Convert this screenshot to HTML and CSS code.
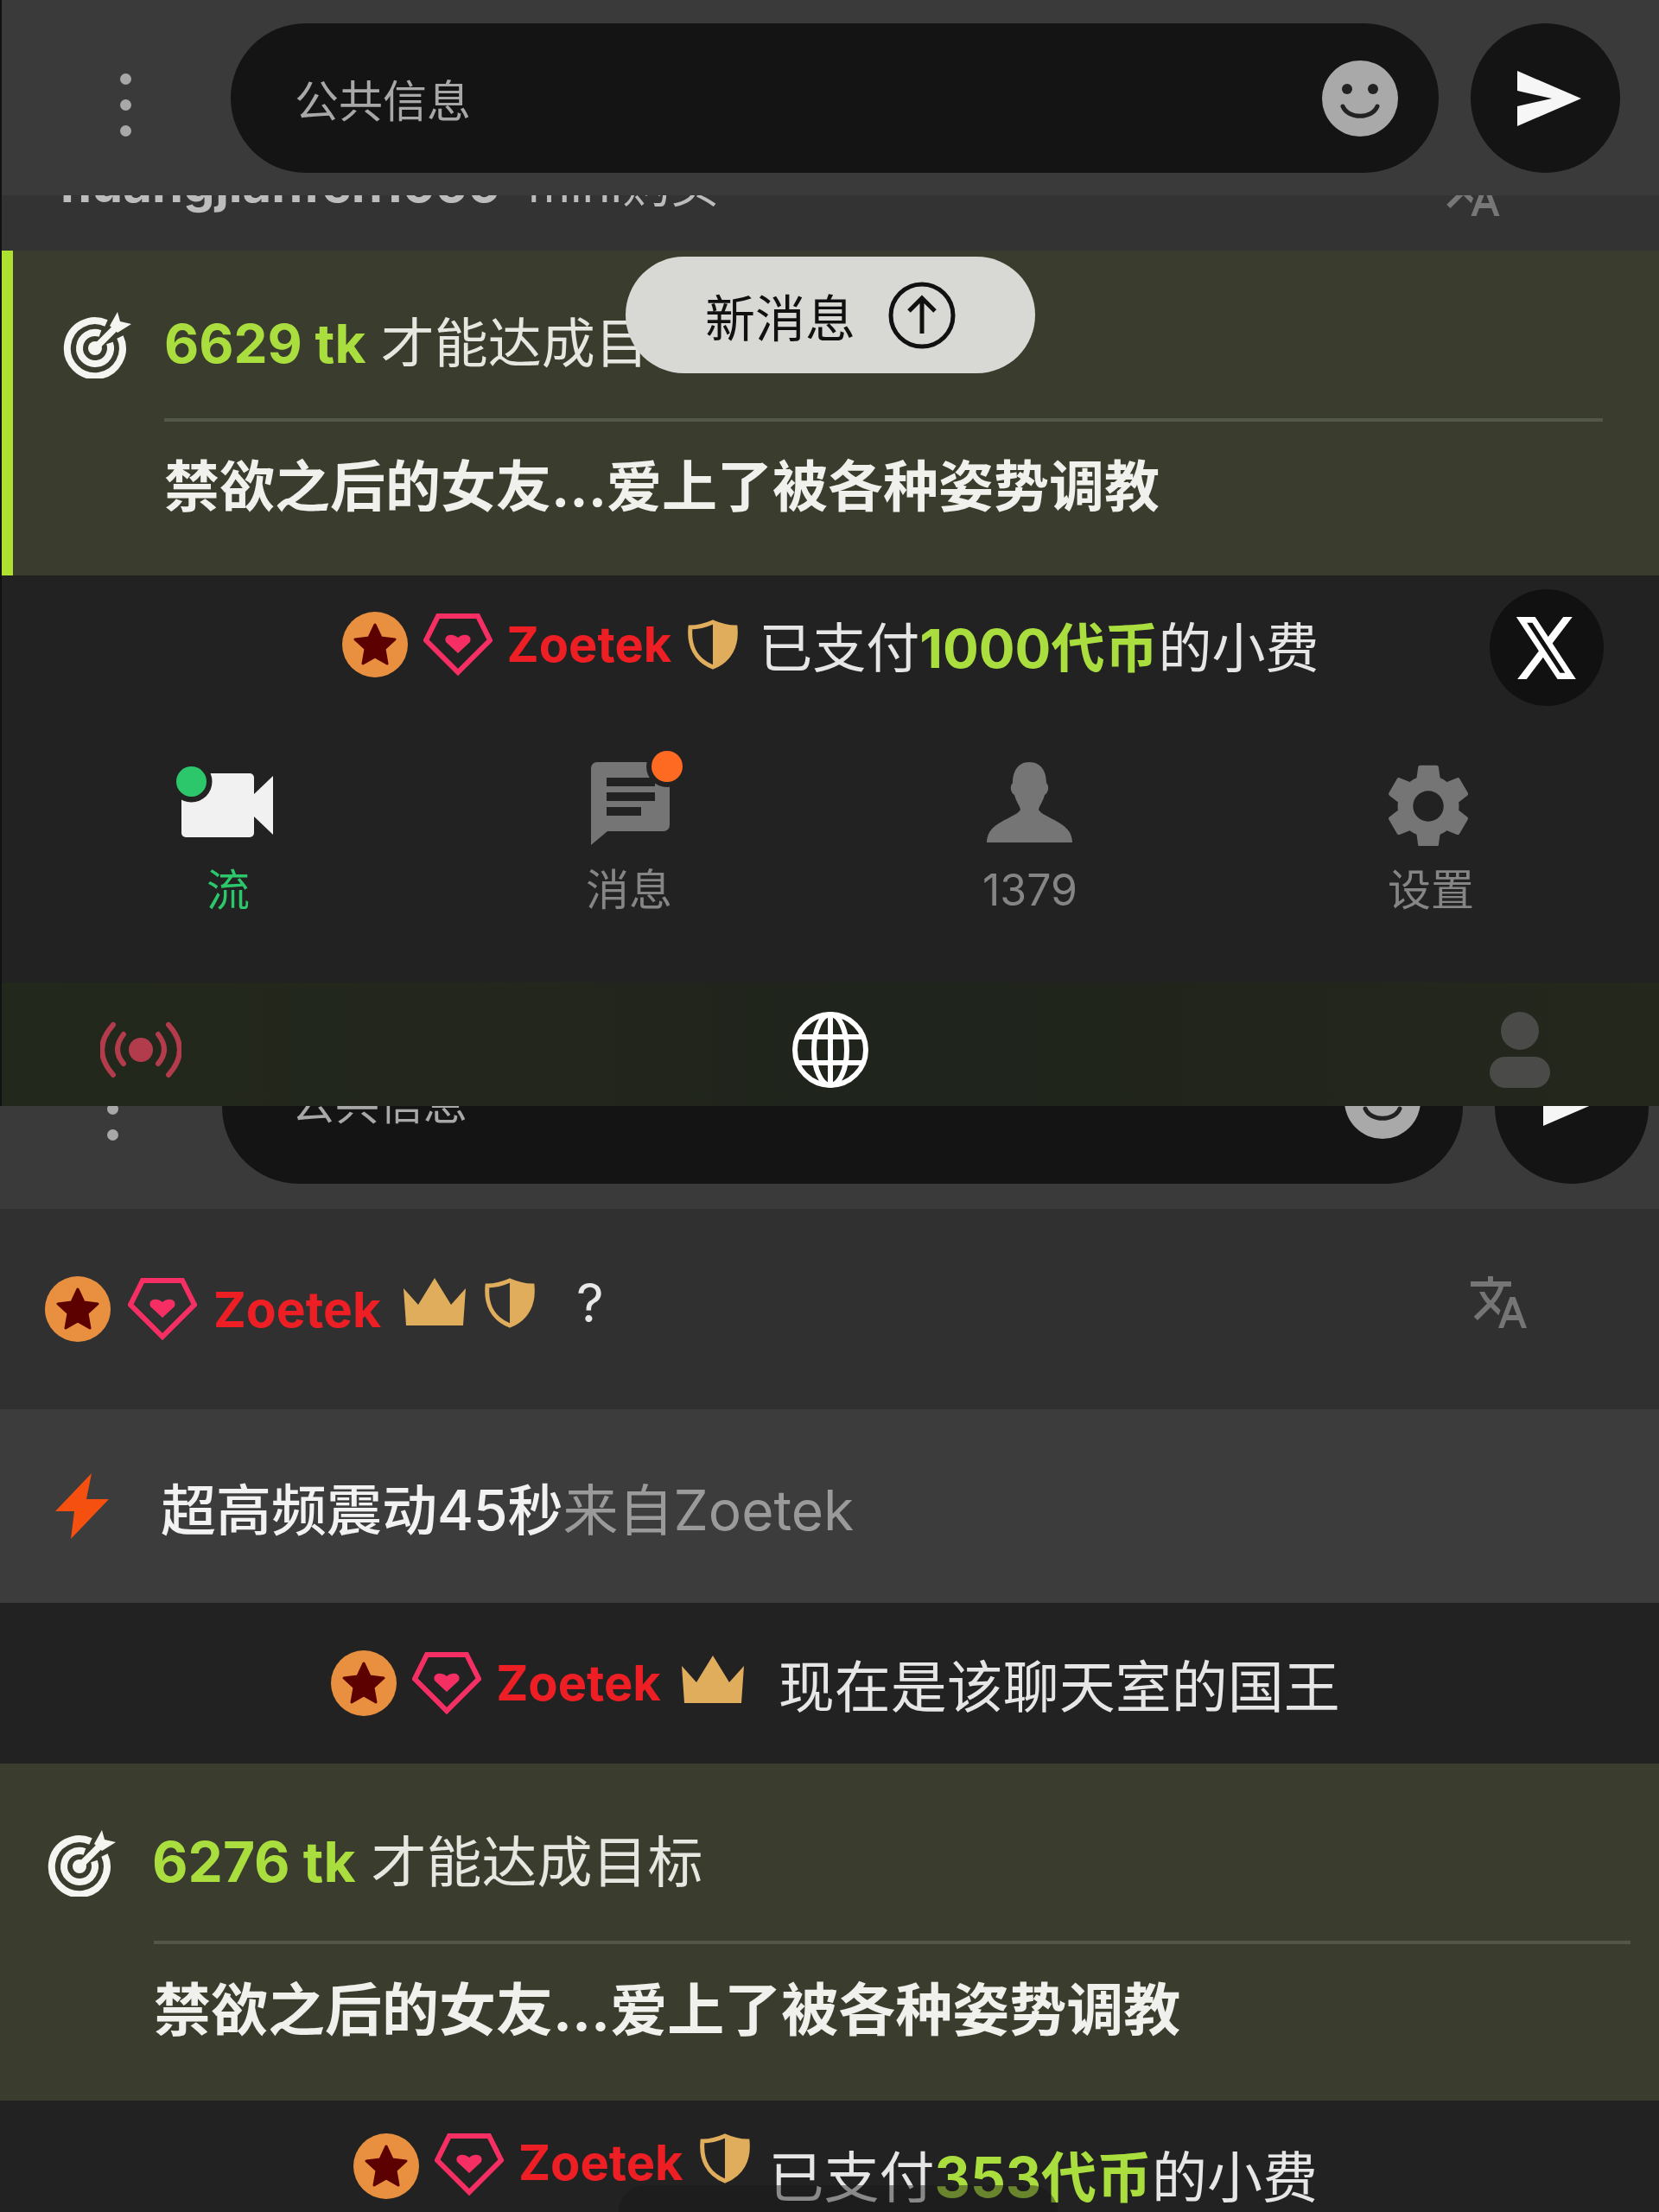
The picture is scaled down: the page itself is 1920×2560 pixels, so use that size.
FILE: index.html
```html
<!DOCTYPE html>
<html>
<head>
    <title>Chat</title>
    <link rel="stylesheet" href="styles.css">
</head>
<body>
    <!-- shared icons -->
    <svg class="defs" width="0" height="0">
        <symbol id="i-star" viewBox="0 0 76 76">
            <circle cx="38" cy="38" r="38" fill="#e8903f"/>
            <path d="M38 15l7 15 16 2-12 11 3 17-14-8-14 8 3-17-12-11 16-2z" fill="#5c0000" stroke="#5c0000" stroke-width="3" stroke-linejoin="round"/>
        </symbol>
        <symbol id="i-gem" viewBox="0 0 80 72">
            <path d="M17 3h46l14 28-37 37L3 31z" fill="none" stroke="#f52f63" stroke-width="6"/>
            <path d="M40 50L26 34l3-7h22l3 7z" fill="none" stroke="#f52f63" stroke-width="0"/>
            <path d="M40 46L26 33c-3-8 7-11 14-5 7-6 17-3 14 5z" fill="#f52f63"/>
        </symbol>
        <symbol id="i-shield" viewBox="0 0 58 58">
            <path d="M29 3c9 4 18 6 26 6 2 21-6 38-26 46C9 47 1 30 3 9c8 0 17-2 26-6z" fill="none" stroke="#e0ad5c" stroke-width="5"/>
            <path d="M29 3c9 4 18 6 26 6 2 21-6 38-26 46z" fill="#e0ad5c"/>
        </symbol>
        <symbol id="i-crown" viewBox="0 0 72 55">
            <path d="M0 12l17 19L36 0l19 31 17-19-3 43H3z" fill="#e0ad5c"/>
        </symbol>
        <symbol id="i-target" viewBox="0 0 80 80">
            <g fill="none" stroke="#f4f5f0" stroke-width="8">
                <path d="M50 16A32 32 0 1 0 66 32"/>
                <path d="M43 28A18 18 0 1 0 54 39"/>
                <path d="M37 45L60 22"/>
            </g>
            <circle cx="37" cy="45" r="8" fill="#f4f5f0"/>
            <path d="M54 19L63 3l3 11 13 3-16 10z" fill="#f4f5f0"/>
        </symbol>
        <symbol id="i-smile" viewBox="0 0 88 88">
            <circle cx="44" cy="44" r="44" fill="#a9a9a9"/>
            <circle cx="29" cy="33" r="6" fill="#222"/>
            <circle cx="59" cy="33" r="6" fill="#222"/>
            <path d="M24 53c6 15 34 15 40 0" fill="none" stroke="#222" stroke-width="5" stroke-linecap="round"/>
        </symbol>
        <symbol id="i-send" viewBox="0 0 76 64">
            <path d="M2 0l74 32-74 32V41l40-9-40-9z" fill="#f6f6f6"/>
        </symbol>
        <symbol id="i-translate" viewBox="1.5 2 22 20">
            <path d="M12.87 15.07l-2.54-2.51.03-.03c1.74-1.94 2.98-4.17 3.71-6.53H17V4h-7V2H8v2H1v1.99h11.17C11.5 7.92 10.44 9.75 9 11.35 8.07 10.32 7.3 9.19 6.69 8h-2c.73 1.63 1.73 3.17 2.98 4.56l-5.09 5.02L4 19l5-5 3.11 3.11.76-2.04zM18.5 10h-2L12 22h2l1.12-3h4.75L21 22h2l-4.5-12zm-2.62 7l1.62-4.33L19.12 17h-3.24z" fill="currentColor"/>
        </symbol>
    </svg>

    <div class="screen screen-a">
        <div class="composer composer-a">
            <div class="dots"><i></i><i></i><i></i></div>
            <div class="pill">
                <span class="placeholder">公共信息</span>
                <svg class="smile"><use href="#i-smile"/></svg>
            </div>
            <div class="send"><svg class="send-icon"><use href="#i-send"/></svg></div>
        </div>

        <div class="cut-row">
            <div class="cut-text"><b>huangjianfen1666</b> <span>mini购买</span></div>
            <svg class="cut-icon"><use href="#i-translate"/></svg>
        </div>

        <div class="goal goal-a">
            <div class="goal-top">
                <svg class="target"><use href="#i-target"/></svg>
                <span class="goal-text"><b class="lime">6629 tk</b> 才能达成目标</span>
            </div>
            <div class="goal-line"></div>
            <div class="goal-title">禁欲之后的女友...爱上了被各种姿势调教</div>
        </div>

        <div class="notice notice-a">
            <svg class="star"><use href="#i-star"/></svg>
            <svg class="gem"><use href="#i-gem"/></svg>
            <span class="name">Zoetek</span>
            <svg class="shield"><use href="#i-shield"/></svg>
            <span class="notice-text">已支付<b class="lime">1000代币</b>的小费</span>
        </div>

        <nav class="tabs">
            <div class="tab active">
                <svg class="tab-icon" viewBox="0 0 130 110">
                    <rect x="11" y="26" width="84" height="74" rx="5" fill="#f1f1f1"/>
                    <path d="M95 50l22-21v68L95 76z" fill="#f1f1f1"/>
                    <circle cx="22.5" cy="35.5" r="24" fill="#222"/>
                    <circle cx="22.5" cy="35.5" r="17.5" fill="#2cc76a"/>
                </svg>
                <span>流</span>
            </div>
            <div class="tab">
                <svg class="tab-icon" viewBox="0 0 130 110">
                    <path d="M28 13h77a7 7 0 0 1 7 7v66a7 7 0 0 1-7 7H40l-19 16V20a7 7 0 0 1 7-7z" fill="#757575"/>
                    <path d="M39 31h56v10H39zM39 48h56v10H39zM39 65h40v10H39z" fill="#222"/>
                    <circle cx="109" cy="18" r="24" fill="#222"/>
                    <circle cx="109" cy="18" r="18" fill="#ff6a22"/>
                </svg>
                <span>消息</span>
            </div>
            <div class="tab">
                <svg class="tab-icon" viewBox="0 0 130 110">
                    <path d="M64 13c-13 0-19 11-19 24-4 4-2 12 2 14 2 8 6 12 7 17-3 7-27 13-35 25-3 4-4 10-4 13h99c0-3-1-9-4-13-8-12-32-18-35-25 1-5 5-9 7-17 4-2 6-10 2-14 0-13-6-24-20-24z" fill="#757575"/>
                </svg>
                <span>1379</span>
            </div>
            <div class="tab">
                <svg class="tab-icon" viewBox="-3 -3 26.4 22.33">
                    <g transform="translate(-2.4 -2)">
                        <path d="M19.14 12.94c.04-.3.06-.61.06-.94 0-.32-.02-.64-.07-.94l2.03-1.58a.49.49 0 0 0 .12-.61l-1.92-3.32a.488.488 0 0 0-.59-.22l-2.39.96c-.5-.38-1.03-.7-1.62-.94l-.36-2.54a.484.484 0 0 0-.48-.41h-3.84c-.24 0-.43.17-.47.41l-.36 2.54c-.59.24-1.13.57-1.62.94l-2.39-.96c-.22-.08-.47 0-.59.22L2.74 8.87c-.12.21-.08.47.12.61l2.03 1.58c-.05.3-.09.63-.09.94s.02.64.07.94l-2.03 1.58a.49.49 0 0 0-.12.61l1.92 3.32c.12.22.37.29.59.22l2.39-.96c.5.38 1.03.7 1.62.94l.36 2.54c.05.24.24.41.48.41h3.84c.24 0 .44-.17.47-.41l.36-2.54c.59-.24 1.13-.56 1.62-.94l2.39.96c.22.08.47 0 .59-.22l1.92-3.32c.12-.22.07-.47-.12-.61l-2.01-1.58zM12 15.6c-1.98 0-3.6-1.62-3.6-3.6s1.62-3.6 3.6-3.6 3.6 1.62 3.6 3.6-1.62 3.6-3.6 3.6z" fill="#757575"/>
                    </g>
                </svg>
                <span>设置</span>
            </div>
        </nav>

        <div class="bottom-nav">
            <svg class="live" viewBox="0 0 94 68">
                <circle cx="47" cy="34" r="14" fill="#b23c4c"/>
                <g fill="none" stroke="#b23c4c" stroke-width="6" stroke-linecap="round">
                    <path d="M15 5Q-11 34 15 63"/>
                    <path d="M27 16Q13 34 27 50"/>
                    <path d="M79 5Q105 34 79 63"/>
                    <path d="M67 16Q81 34 67 50"/>
                </g>
            </svg>
            <svg class="globe" viewBox="0 0 88 88">
                <g fill="none" stroke="#fff" stroke-width="6">
                    <circle cx="44" cy="44" r="41"/>
                    <ellipse cx="44" cy="44" rx="19" ry="41"/>
                    <path d="M44 3v82M7 29h74M7 59h74"/>
                </g>
            </svg>
            <svg class="me" viewBox="0 0 70 88">
                <circle cx="35" cy="22" r="22" fill="#4a4a48"/>
                <rect x="0" y="52" width="70" height="36" rx="18" fill="#4a4a48"/>
            </svg>
        </div>

        <!-- floating over the rows -->
        <div class="new-msg">
            <span>新消息</span>
            <svg class="up" viewBox="0 0 78 78">
                <circle cx="39" cy="39" r="36" fill="none" stroke="#111" stroke-width="5"/>
                <path d="M39 60V20M24 34l15-15 15 15" fill="none" stroke="#111" stroke-width="5"/>
            </svg>
        </div>
        <div class="x-btn">
            <svg viewBox="1 2 22.5 20" preserveAspectRatio="none"><path d="M18.244 2.25h3.308l-7.227 8.26 8.502 11.24H16.17l-5.214-6.817L4.99 21.75H1.68l7.73-8.835L1.254 2.25H8.08l4.713 6.231zm-1.161 17.52h1.833L7.084 4.126H5.117z" fill="#fff"/></svg>
        </div>
    </div>

    <div class="screen screen-b">
        <div class="composer composer-b">
            <div class="dots"><i></i><i></i><i></i></div>
            <div class="pill">
                <span class="placeholder">公共信息</span>
                <svg class="smile"><use href="#i-smile"/></svg>
            </div>
            <div class="send"><svg class="send-icon"><use href="#i-send"/></svg></div>
        </div>

        <div class="chat-row">
            <svg class="star"><use href="#i-star"/></svg>
            <svg class="gem"><use href="#i-gem"/></svg>
            <span class="name">Zoetek</span>
            <svg class="crown"><use href="#i-crown"/></svg>
            <svg class="shield"><use href="#i-shield"/></svg>
            <span class="chat-msg">?</span>
            <svg class="translate"><use href="#i-translate"/></svg>
        </div>

        <div class="toy-row">
            <svg class="bolt" viewBox="0 0 62 76"><path d="M42 0L0 44h22l-4 32 44-46H36z" fill="#f5500f"/></svg>
            <span class="toy-text">超高频震动45秒<span class="muted">来自Zoetek</span></span>
        </div>

        <div class="notice notice-king">
            <svg class="star"><use href="#i-star"/></svg>
            <svg class="gem"><use href="#i-gem"/></svg>
            <span class="name">Zoetek</span>
            <svg class="crown"><use href="#i-crown"/></svg>
            <span class="notice-text">现在是该聊天室的国王</span>
        </div>

        <div class="goal goal-b">
            <div class="goal-top">
                <svg class="target"><use href="#i-target"/></svg>
                <span class="goal-text"><b class="lime">6276 tk</b> 才能达成目标</span>
            </div>
            <div class="goal-line"></div>
            <div class="goal-title">禁欲之后的女友...爱上了被各种姿势调教</div>
        </div>

        <div class="notice notice-tip">
            <svg class="star"><use href="#i-star"/></svg>
            <svg class="gem"><use href="#i-gem"/></svg>
            <span class="name">Zoetek</span>
            <svg class="shield"><use href="#i-shield"/></svg>
            <span class="notice-text">已支付<b class="lime">353代币</b>的小费</span>
        </div>
        <div class="scroll-tab"></div>
    </div>
</body>
</html>
```

FILE: styles.css
```css
* { box-sizing: border-box; }
html, body { margin: 0; padding: 0; }
body { width: 1920px; height: 2560px; overflow: hidden; background: #222; color: #e8e8e8; font-family: Inter, "Noto Sans CJK SC", sans-serif; }
svg { display: block; flex: none; }
.defs { position: absolute; }
.lime { color: #a9de3e; font-weight: 700; }

.screen { position: relative; overflow: hidden; }
.screen-a { height: 1280px; border-left: 2px solid #111; }
.screen-b { height: 1280px; }

/* composer */
.composer { display: flex; background: #3a3a3a; overflow: hidden; }
.composer-a { height: 226px; padding: 27px 45px 26px 0; align-items: flex-start; }
.composer-b { height: 119px; padding: 0 12px 29px 0; align-items: flex-end; }
.dots { display: flex; flex-direction: column; gap: 17px; }
.dots i { display: block; width: 13px; height: 13px; border-radius: 50%; background: #a8a8a8; }
.pill { display: flex; align-items: center; justify-content: space-between; background: #141414; border-radius: 90px; flex: 1; height: 173px; }
.placeholder { color: #a8a8a8; font-size: 51px; }
.smile { width: 88px; height: 88px; }
.send { display: flex; align-items: center; justify-content: center; background: #141414; border-radius: 50%; flex: none; }
.send-icon { width: 76px; height: 64px; }

.composer-a .dots { margin: 58px 0 0 137px; }
.composer-a .pill { margin-left: 115px; padding: 0 47px 0 74px; }
.composer-a .send { width: 173px; height: 173px; margin-left: 37px; }
.composer-a .send-icon { margin-left: 6px; }

.composer-b .dots { margin: 0 0 50px 124px; }
.composer-b .pill { margin-left: 120px; height: 178px; padding: 0 49px 0 80px; }
.composer-b .placeholder { margin-top: -15px; }
.composer-b .smile { margin-top: -15px; }
.composer-b .send { width: 178px; height: 178px; margin-left: 37px; }
.composer-b .send-icon { margin: -20px 0 0 6px; }

/* row cut off under the composer */
.cut-row { height: 64px; background: #333; overflow: hidden; display: flex; justify-content: space-between; align-items: flex-start; padding: 0 180px 0 68px; color: #bcbcbc; }
.cut-text { font-size: 58px; line-height: 70px; margin-top: -48px; white-space: nowrap; }
.cut-text span { margin-left: 16px; font-size: 56px; }
.cut-icon { width: 72px; height: 60px; margin-top: -36px; color: #777; }

/* goal cards */
.goal { background: #3a3d2e; }
.goal-a { height: 376px; border-left: 13px solid #aee02f; padding-top: 68px; }
.goal-b { height: 390px; padding-top: 74px; }
.goal-top { display: flex; align-items: center; }
.goal-a .goal-top { padding-left: 58px; }
.goal-b .goal-top { padding-left: 55px; }
.target { width: 80px; height: 80px; }
.goal-a .target { margin-right: 37px; }
.goal-b .target { margin-right: 41px; }
.goal-text { font-size: 62px; line-height: 80px; white-space: nowrap; color: #e6e7e0; }
.goal-b .goal-text { font-size: 64px; }
.goal-line { height: 4px; background: #53574a; }
.goal-a .goal-line { margin: 46px 65px 0 175px; }
.goal-b .goal-line { margin: 51px 33px 0 178px; }
.goal-title { font-size: 64px; line-height: 80px; font-weight: 700; color: #f0f1ec; white-space: nowrap; }
.goal-a .goal-title { margin: 35px 0 0 175px; }
.goal-b .goal-title { margin: 36px 0 0 178px; font-size: 66px; }

/* centred notices */
.notice { display: flex; align-items: center; justify-content: center; background: #222; white-space: nowrap; }
.notice-a { height: 164px; padding-bottom: 4px; }
.notice-king { height: 186px; padding-left: 14px; }
.notice-tip { height: 129px; padding: 0 0 0 14px; align-items: flex-start; padding-top: 38px; }
.star { width: 76px; height: 76px; }
.gem { width: 80px; height: 72px; margin-left: 18px; }
.name { color: #ee1f24; font-weight: 700; font-size: 56px; margin-left: 17px; }
.shield { width: 58px; height: 58px; margin-left: 19px; }
.crown { width: 72px; height: 55px; margin-left: 24px; }
.notice-text { font-size: 62px; margin-left: 24px; color: #e6e6e6; }
.notice-king .crown { margin-top: -10px; }
.notice-king .notice-text { font-size: 65px; margin-left: 40px; }
.notice-tip .notice-text { font-size: 64px; margin-left: 22px; }

/* tabs */
.tabs { display: grid; grid-template-columns: repeat(4, 1fr); height: 307px; padding: 39px 32px 0 30px; background: #222; }
.tab { display: flex; flex-direction: column; align-items: center; color: #858585; font-size: 50px; line-height: 60px; }
.tab.active { color: #2cc76a; }
.tab-icon { width: 130px; height: 110px; }
.tab span { margin-top: 21px; }

.bottom-nav { position: relative; height: 143px; background: linear-gradient(90deg, #23281c, #22261d 35%, #1f241c 55%, #24271c); display: grid; grid-template-columns: repeat(3, 1fr); align-items: center; justify-items: center; }
.live { width: 94px; height: 68px; margin-left: -318px; margin-top: 12px; }
.globe { width: 88px; height: 88px; margin-top: 12px; }
.me { width: 70px; height: 88px; margin-left: 318px; margin-top: 12px; }

.new-msg { position: absolute; left: 722px; top: 297px; width: 474px; height: 135px; border-radius: 68px; background: #d8d9d5; color: #111; display: flex; align-items: center; gap: 38px; padding-left: 92px; font-size: 58px; }
.up { width: 78px; height: 78px; }
.x-btn { position: absolute; left: 1722px; top: 682px; width: 132px; height: 135px; border-radius: 50%; background: #111; display: flex; align-items: center; justify-content: center; }
.x-btn svg { width: 72px; height: 74px; }

/* second capture */
.chat-row { display: flex; align-items: center; height: 232px; background: #303030; padding: 0 151px 0 52px; white-space: nowrap; }
.chat-row .gem { margin-left: 20px; }
.chat-row .name { margin-left: 19px; font-size: 57px; }
.chat-row .crown { margin-left: 26px; margin-top: -18px; }
.chat-row .shield { margin-left: 22px; margin-top: -14px; }
.chat-msg { font-size: 62px; margin: -16px 0 0 48px; }
.translate { width: 67px; height: 60px; margin: -16px 0 0 auto; color: #757575; }

.toy-row { display: flex; align-items: center; height: 224px; background: #3c3c3c; padding-left: 64px; white-space: nowrap; }
.bolt { width: 62px; height: 76px; margin-right: 60px; }
.toy-text { font-size: 64px; font-weight: 500; color: #f2f2f2; }
.muted { color: #9a9a9a; font-weight: 400; }

.scroll-tab { position: absolute; left: 716px; bottom: 0; width: 508px; height: 31px; border-radius: 40px 40px 0 0; background: rgba(24, 24, 24, 0.45); }
```
